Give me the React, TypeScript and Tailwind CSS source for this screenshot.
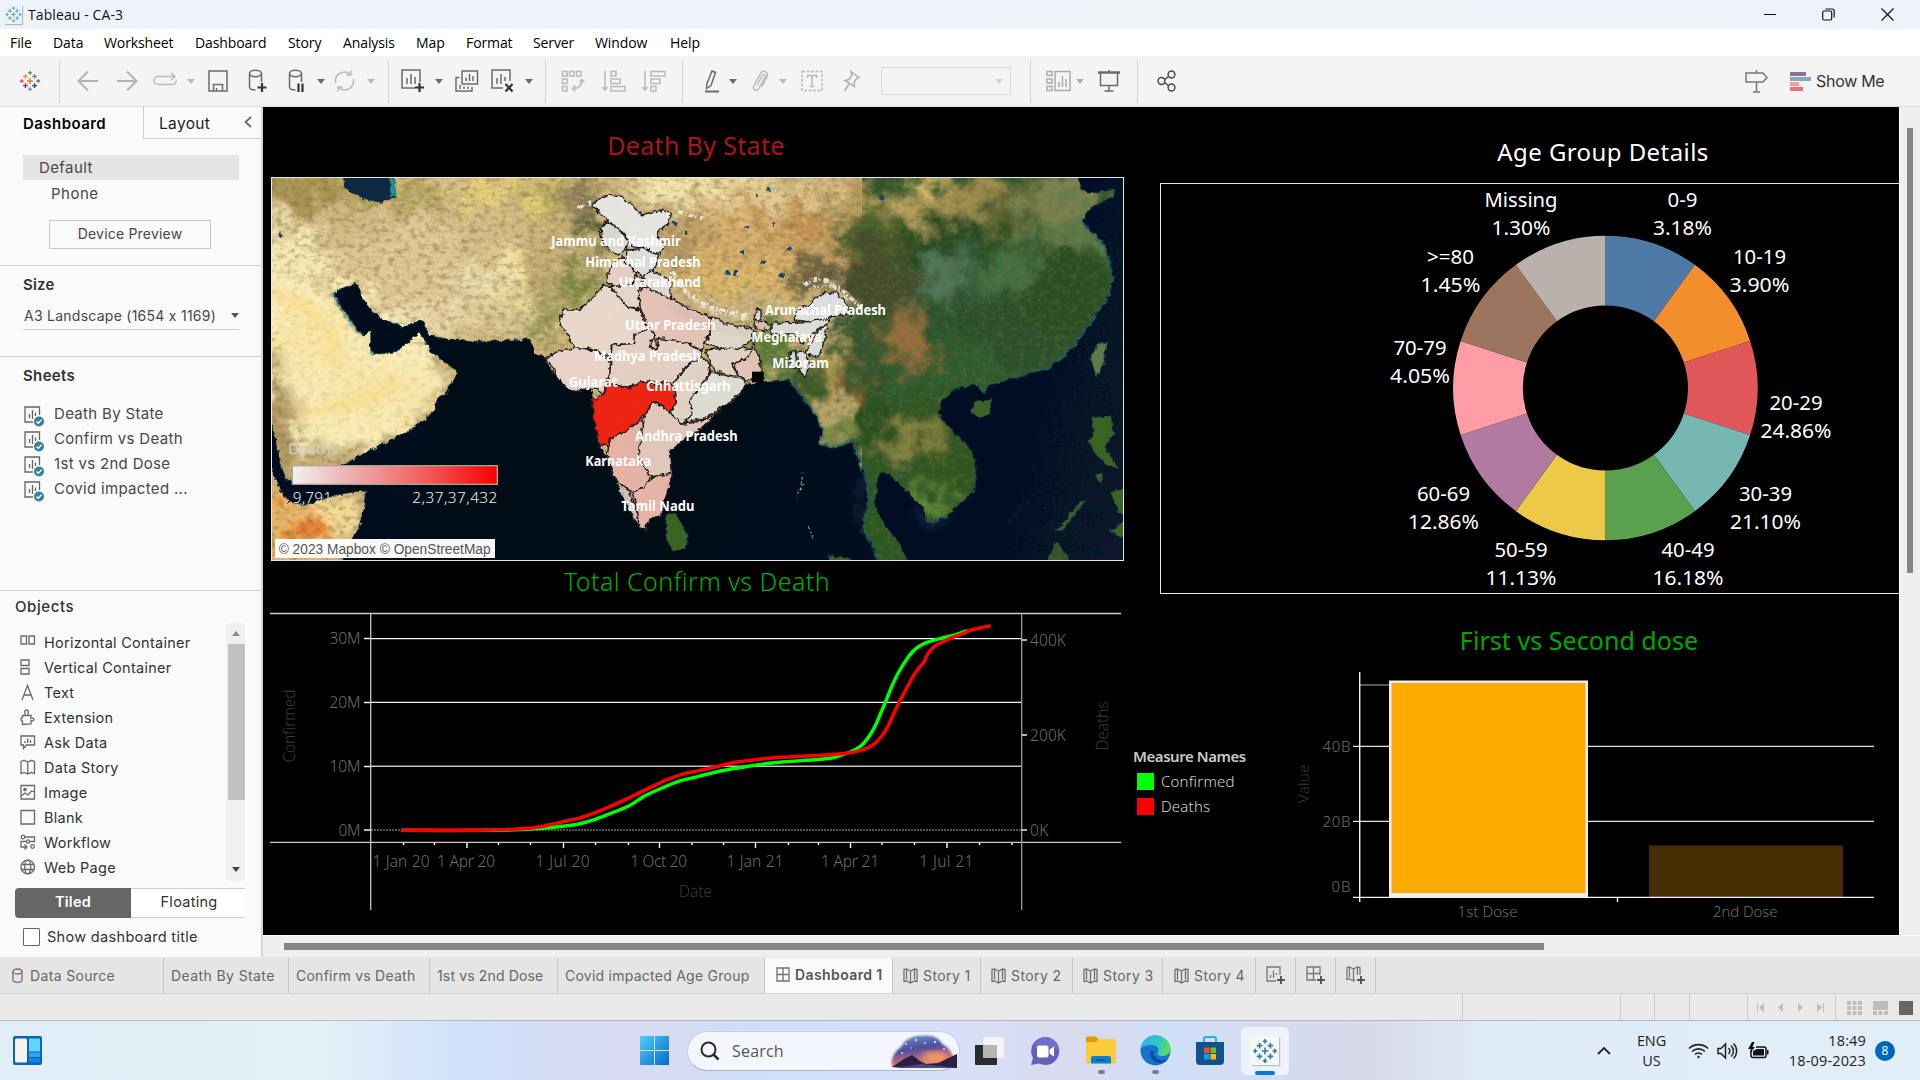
import React from "react";

type P = { children?: React.ReactNode; className?: string };

/* ---------- shared pieces ---------- */

const Caret = ({ className = "" }: P) => (
  <svg className={`shrink-0 ${className}`} width="8" height="5" viewBox="0 0 8 5">
    <path d="M0 0h8L4 5z" fill="currentColor" />
  </svg>
);

const Sep = ({ className = "" }: P) => <div className={`h-[43px] w-px shrink-0 bg-[#d2d2d2] ${className}`} />;

const Ic = ({ w = 24, h = 22, className = "", children }: P & { w?: number; h?: number }) => (
  <svg
    className={`shrink-0 ${className}`}
    width={w}
    height={h}
    viewBox={`0 0 ${w} ${h}`}
    fill="none"
    stroke="currentColor"
    strokeWidth="1.5"
  >
    {children}
  </svg>
);

const plusMarks: [number, number, number, string][] = [
  [12, 12, 3.2, "#e8762c"],
  [7, 7, 2.6, "#eb912c"],
  [17, 7, 2.6, "#5b879b"],
  [7, 17, 2.6, "#c72035"],
  [17, 17, 2.6, "#1f457e"],
  [12, 3, 2, "#59879b"],
  [12, 21, 2, "#7199a6"],
  [3, 12, 2, "#c8586d"],
  [21, 12, 2, "#5c6692"],
];

const TableauMark = ({ size, mono, className = "" }: P & { size: number; mono?: string }) => (
  <svg className={`shrink-0 ${className}`} width={size} height={size} viewBox="0 0 24 24">
    {plusMarks.map(([x, y, r, c], i) => (
      <path key={i} d={`M${x - r} ${y}h${2 * r}M${x} ${y - r}v${2 * r}`} stroke={mono ?? c} strokeWidth="1.5" />
    ))}
  </svg>
);

/* ---------- title, menu, toolbar ---------- */

const TitleBar = () => (
  <div className="flex h-[29px] items-center bg-[linear-gradient(90deg,#eef3fb_0%,#eef3fb_50%,#edf3f6_60%,#eef3f8_75%,#eef2fb_100%)] pl-1">
    <div className="flex h-[19px] w-[18px] items-center justify-center bg-[#eef1f2] shadow-[1px_1px_1px_#b5bcc0]">
      <TableauMark size={17} mono="#5aa0c4" />
    </div>
    <span className="ml-[6px] font-['Open_Sans'] text-[14px] tracking-[0.1px] text-[#111]">Tableau - CA-3</span>
    <div className="ml-auto flex items-center text-[#111]">
      <svg width="13" height="13" viewBox="0 0 13 13" stroke="currentColor">
        <path d="M0 6.500h12" />
      </svg>
      <svg className="ml-[45px]" width="13" height="13" viewBox="0 0 13 13" fill="none" stroke="currentColor" strokeWidth="1.200">
        <rect x="0.700" y="3" width="9" height="9" rx="1.500" />
        <path d="M3.500 1h6.500a2.200 2.200 0 0 1 2.200 2.200v6.300" />
      </svg>
      <svg className="ml-[46px] mr-[26px]" width="13" height="13" viewBox="0 0 13 13" stroke="currentColor" strokeWidth="1.200">
        <path d="M0.500 0.500l12 12M12.500 0.500l-12 12" />
      </svg>
    </div>
  </div>
);

const menu = [
  ["File", "w-[43px]"],
  ["Data", "w-[51px]"],
  ["Worksheet", "w-[91px]"],
  ["Dashboard", "w-[93px]"],
  ["Story", "w-[55px]"],
  ["Analysis", "w-[73px]"],
  ["Map", "w-[50px]"],
  ["Format", "w-[67px]"],
  ["Server", "w-[62px]"],
  ["Window", "w-[75px]"],
  ["Help", "w-[50px]"],
];

const MenuBar = () => (
  <div className="flex h-[27px] items-center bg-white pl-[10px] font-['Open_Sans'] text-[14px] tracking-[-0.1px] text-black">
    {menu.map(([t, w]) => (
      <span key={t} className={w}>
        {t}
      </span>
    ))}
  </div>
);

const Toolbar = () => (
  <div className="flex h-[51px] items-center border-b border-[#dcdcdc] bg-[#f4f4f4] text-[#6b6b6b]">
    <TableauMark size={22} className="ml-[19px]" />
    <Sep className="ml-[18px]" />
    <Ic w={21} className="ml-[17px] text-[#b4b4b4]">
      <path d="M21 11H1.500M11 1.500L1.500 11l9.500 9.500" strokeWidth="2" />
    </Ic>
    <Ic w={21} className="ml-[19px] text-[#b4b4b4]">
      <path d="M0 11h19.500M10 1.500l9.500 9.500-9.500 9.500" strokeWidth="2" />
    </Ic>
    <Ic w={25} className="ml-[15px] text-[#b9b9b9]">
      <path d="M21 6.500H5a3.800 3.800 0 0 0 0 8h14.500a3.800 3.800 0 0 0 3.500-5M18 3l4 3.500-4 3.500" />
    </Ic>
    <Caret className="ml-[9px] text-[#b9b9b9]" />
    <Ic w={20} className="ml-[13px]">
      <path d="M1 1h18v20H1zM5.500 21v-6.500h9V21M8.500 18v3" />
    </Ic>
    <Ic w={20} h={24} className="ml-5">
      <ellipse cx="7.500" cy="4.500" rx="6" ry="3.200" />
      <path d="M1.500 4.500V18c0 1.800 2.500 3 6 3M13.500 4.500V13" />
      <path d="M14 14v9M9.500 18.500h9" stroke="#333" strokeWidth="2.200" />
    </Ic>
    <Ic w={20} h={24} className="ml-5">
      <ellipse cx="7.500" cy="4.500" rx="6" ry="3.200" />
      <path d="M1.500 4.500V18c0 1.800 2.500 3 6 3M13.500 4.500V13" />
      <path d="M10.500 14.500v8.500M14.500 14.500v8.500" stroke="#333" strokeWidth="2.200" />
    </Ic>
    <Caret className="ml-[9px]" />
    <Ic w={21} className="ml-[9px] text-[#b9b9b9]">
      <path d="M1.800 13A8.800 8.800 0 0 1 16 4.200M19.200 9A8.800 8.800 0 0 1 5 17.800M16.800 0.500v4.500h-4.500M4.200 21.500V17h4.500" />
    </Ic>
    <Caret className="ml-3 text-[#b9b9b9]" />
    <Sep className="ml-[13px]" />
    <Ic h={24} className="ml-3">
      <path d="M14 19H1V1h18v12M6 15V9M10 15V5M14 15V8" />
      <path d="M18.500 14v9M14 18.500h9" stroke="#333" strokeWidth="2.200" />
    </Ic>
    <Caret className="ml-[10px]" />
    <Ic className="ml-3">
      <path d="M7 1h15.500v13H7zM11 11V7.500M14.500 11V4M18 11V6M4.500 7.500H1V21h16v-4M5 19v-4M9 19v-2.500M13 19v-2.500" />
    </Ic>
    <Ic h={24} className="ml-3">
      <path d="M12 19H1V1h18v11M6 15V9M10 15V5M14 12V8" />
      <path d="M14.500 15l7 7.500M21.500 15l-7 7.500" stroke="#333" strokeWidth="2.200" />
    </Ic>
    <Caret className="ml-[10px]" />
    <Sep className="ml-[12px]" />
    <Ic className="ml-[15px] text-[#b9b9b9]">
      <path d="M1.500 1.500h4.500v4.500H1.500zM8.500 1.500H13v4.500H8.500zM15.500 1.500H20v4.500h-4.500zM1.500 9H6v4.500H1.500zM1.500 16.500H6V21H1.500z" />
      <path d="M21 10c0 5-3 8.500-9 8.500M18.500 12.500L21 9.500l2.500 3M14.500 15.500l-3 3 3 3" />
    </Ic>
    <Ic className="ml-[17px] text-[#b9b9b9]">
      <path d="M3 1v19M0.500 17L3 20l2.500-3M9 1.500h5v4.500H9zM9 9h9v4.500H9zM9 16.500h14V21H9z" />
    </Ic>
    <Ic className="ml-4 text-[#b9b9b9]">
      <path d="M3 1v19M0.500 17L3 20l2.500-3M9 1.500h14v4.500H9zM9 9h9v4.500H9zM9 16.500h5V21H9z" />
    </Ic>
    <Sep className="ml-4" />
    <Ic w={18} h={24} className="ml-5">
      <path d="M9 2l3.500 1.500-4.500 13-4.500 3 .5-5z" />
      <path d="M2 22.500h14" strokeWidth="2" />
    </Ic>
    <Caret className="ml-[8px]" />
    <Ic w={18} className="ml-[14px] text-[#b9b9b9]">
      <path d="M6 15.500l5-9.500c1.500-2.500 4-1 3 1L8 18.500c-2 3.500-7 1-5-3L9.500 3.500C11.500-.5 18 1.500 16 6.500l-5 10" />
    </Ic>
    <Caret className="ml-[10px] text-[#b9b9b9]" />
    <Ic w={22} className="ml-[14px] text-[#b9b9b9]">
      <path d="M1 1.500h20v19H1z" strokeDasharray="3 1.500" />
      <path d="M6.500 8V5.500h9V8M11 5.500v11M8.500 16.500h5" />
    </Ic>
    <Ic w={19} className="ml-[19px] text-[#b0b0b0]">
      <path d="M9 1.500l8 6-2.500 1-2.500 4 .5 4L3 10.500l4-1L10 5zM7 14l-4.500 7" />
    </Ic>
    <div className="ml-5 flex h-7 w-[130px] shrink-0 items-center justify-end border border-[#dadada] pr-[7px] text-[#cfcfcf]">
      <Caret />
    </div>
    <Sep className="ml-[19px]" />
    <Ic w={25} className="ml-[15px] text-[#ababab]">
      <path d="M1 1.500h5v4H1zM1 9h5v4H1zM1 16.500h5v4H1zM9 1.500h15v19H9zM13 17v-5M16.500 17V6M20 17V9" />
    </Ic>
    <Caret className="ml-[5px] text-[#ababab]" />
    <Ic w={22} className="ml-[14px]">
      <path d="M0 2.500h22" strokeWidth="2.500" />
      <path d="M2.500 3v12.500h17V3M11 0v2M11 15.500v5M6.500 21h9" />
    </Ic>
    <Sep className="ml-[17px]" />
    <Ic w={20} className="ml-[19px] text-[#4a4a4a]">
      <circle cx="4.500" cy="11" r="3.400" />
      <circle cx="14.500" cy="4.500" r="3.400" />
      <circle cx="14.500" cy="17.500" r="3.400" />
      <path d="M7.500 9.500l4-3M7.500 12.500l4 3" />
    </Ic>
    <Ic w={24} h={24} className="ml-auto text-[#777]">
      <path d="M1 4h17l4 4.500-4 4.500H1zM11.500 1v3M11.500 13v10M8 23h7" />
    </Ic>
    <svg className="ml-[21px] shrink-0" width="21" height="19" viewBox="0 0 21 19">
      <rect width="16" height="4" fill="#8a719b" />
      <rect y="5" width="21" height="4" fill="#7fa6cf" />
      <rect y="10" width="9" height="4" fill="#f7a380" />
      <rect y="15" width="13" height="4" fill="#f26d78" />
    </svg>
    <span className="ml-[5px] mr-[35px] w-[69px] whitespace-nowrap font-['Inter'] text-[16px] tracking-[-0.3px] text-[#333]">Show Me</span>
  </div>
);

/* ---------- side panel ---------- */

const SheetIcon = () => (
  <svg width="21" height="21" viewBox="0 0 21 21" fill="none" stroke="#666" strokeWidth="1.300">
    <path d="M9 16H1V1h14.500v8M5.500 12V8M8.500 13V4M11.500 10V6.500" />
    <circle cx="15" cy="15.500" r="5" fill="#3a7ea1" stroke="none" />
    <path d="M12.500 15.500l1.800 1.800 3.200-3.600" stroke="#fff" />
  </svg>
);

const objects: [string, React.ReactNode][] = [
  ["Horizontal Container", <path key="p" d="M1 2h5.500v8H1zM9 2h5.500v8H9z" />],
  ["Vertical Container", <path key="p" d="M1 1h8v5.500H1zM1 9.500h8V15H1z" />],
  ["Text", <path key="p" d="M2 16L7.500 1.500 13 16M4 11h7" />],
  ["Extension", <path key="p" d="M2.500 15.500V12c-2 .5-2-4 0-3.500V6.500h3.200C4 3 4.500 1 6.500 1s2.500 2 .8 5.500H11v3c4-1.500 4 3.500 0 2v3.500z" />],
  ["Ask Data", <path key="p" d="M1 2h13.500v9H6.500L3.500 14.500V11H1zM5 9V7M7.700 9V4.500M10.500 9V6" />],
  ["Data Story", <path key="p" d="M1 2.500l3-1.200 3.700 1.700 3.800-1.700 3 1.200v12l-3-1-3.800 1.500L4 13.500l-3 1zM7.700 3v12" />],
  [
    "Image",
    <g key="p">
      <path d="M1 1.500h13.500V15H1zM1 12l4-3 3 2 3.500-4 3 1" />
      <circle cx="5" cy="5.500" r="1.200" fill="#666" />
    </g>,
  ],
  ["Blank", <path key="p" d="M1 1.500h13.500V15H1z" />],
  [
    "Workflow",
    <g key="p">
      <circle cx="3" cy="3" r="1.800" />
      <circle cx="12.500" cy="12.500" r="1.800" />
      <circle cx="8" cy="7.500" r="1.600" />
      <path d="M5 3h9.500v4.500H10M6.500 7.500H1V13h5.500M4.500 10.500L7 13l-2.500 2.500" />
    </g>,
  ],
  [
    "Web Page",
    <g key="p">
      <circle cx="7.700" cy="8" r="6.800" />
      <ellipse cx="7.700" cy="8" rx="3" ry="6.800" />
      <path d="M1.500 5.500h12.500M1.500 10.500h12.500" />
    </g>,
  ],
];

const Sidebar = () => (
  <div className="flex w-[263px] shrink-0 flex-col border-r-2 border-[#d4d4d4] bg-[#fafafa] font-['Inter'] text-[15px] text-[#484848]">
    <div className="flex h-8">
      <div className="flex w-[143px] items-center pl-[23px] pt-[2px] font-semibold tracking-[0.45px] text-black">Dashboard</div>
      <div className="flex flex-1 items-center border-b border-l border-[#cfcfcf] pl-[15px] text-[#222]">
        <span className="pt-[2px] text-[15.500px] tracking-[0.35px]">Layout</span>
        <svg className="mb-[2px] ml-auto mr-[9px]" width="8" height="12" viewBox="0 0 8 12" fill="none" stroke="#666" strokeWidth="1.700">
          <path d="M7 1L1.500 6 7 11" />
        </svg>
      </div>
    </div>
    <div className="ml-[23px] mt-4 flex h-[25px] w-[216px] items-center bg-[#e5e5e5] pl-4 pt-[2px]">
      <span className="tracking-[0.4px]">Default</span>
    </div>
    <div className="flex h-[25px] items-center pl-[51px] pt-[3px] tracking-[0.5px]">Phone</div>
    <div className="ml-[49px] mt-[15px] flex h-[29px] w-[162px] items-center justify-center border border-[#c9c9c9] pb-[2px] text-[14px] tracking-[0.2px]">
      Device Preview
    </div>
    <div className="mt-4 h-[91px] border-t border-[#cfcfcf] pl-[23px] pt-[8px]">
      <div className="font-semibold leading-[22px] tracking-[0.2px] text-[#333]">Size</div>
      <div className="mt-[10px] flex h-[24px] w-[216px] items-center justify-between border-b border-[#c9c9c9] pb-1 pl-[1px] text-[14px]">
        <span className="whitespace-nowrap tracking-[0.26px]">A3 Landscape (1654 x 1169)</span>
        <Caret className="text-[#555]" />
      </div>
    </div>
    <div className="h-[234px] border-t border-[#cfcfcf] pl-[23px] pt-[8px]">
      <div className="font-semibold leading-[22px] tracking-[0.35px] text-[#333]">Sheets</div>
      <div className="mt-[15px]">
        {["Death By State", "Confirm vs Death", "1st vs 2nd Dose", "Covid impacted ..."].map((s) => (
          <div key={s} className="flex h-[25px] items-center pl-[1px]">
            <span className="pt-[3px]">
              <SheetIcon />
            </span>
            <span className="ml-[9px] tracking-[0.32px]">{s}</span>
          </div>
        ))}
      </div>
    </div>
    <div className="flex flex-1 flex-col border-t border-[#cfcfcf] pl-[15px] text-[14.500px] tracking-[0.27px] text-[#333]">
      <div className="pt-[5px] text-[15px] font-medium leading-[22px] tracking-[0.6px]">Objects</div>
      <div className="mt-[5px] flex h-[258px] w-[230px]">
        <div className="flex-1 overflow-hidden pt-[7px]">
          {objects.map(([t, g]) => (
            <div key={t} className="flex h-[25px] items-center pl-[5px]">
              <svg width="16" height="17" viewBox="0 0 16 17" fill="none" stroke="#6a6a6a" strokeWidth="1.300">
                {g}
              </svg>
              <span className="ml-2 whitespace-nowrap">{t}</span>
            </div>
          ))}
        </div>
        <div className="flex w-[19px] flex-col items-center bg-[#f0f0f0]">
          <Caret className="my-2 rotate-180 text-[#8c8c8c]" />
          <div className="h-[156px] w-[17px] self-end bg-[#c1c1c1]" />
          <Caret className="mb-[9px] mt-auto text-[#444]" />
        </div>
      </div>
      <div className="mt-[7px] flex h-[30px] w-[230px]">
        <div className="flex w-[116px] items-center justify-center rounded-l-sm bg-[#666] pb-[2px] font-semibold text-white">Tiled</div>
        <div className="flex flex-1 items-center justify-center border-y border-[#cfcfcf] bg-white pb-[2px] pl-[2px]">Floating</div>
      </div>
      <div className="mt-[8px] flex items-center pl-2">
        <div className="h-[18px] w-[17px] rounded-[1px] border border-[#666] bg-white" />
        <span className="ml-[7px] tracking-[0.32px]">Show dashboard title</span>
      </div>
    </div>
  </div>
);

/* ---------- map ---------- */

const states: [string, string][] = [
  ["#e8e8e6", "990,300 1010,282 1045,272 1080,275 1110,300 1140,330 1170,322 1200,315 1225,325 1220,355 1190,375 1185,395 1210,420 1195,445 1170,440 1150,430 1110,425 1100,405 1080,380 1050,355 1035,345 1015,325"],
  ["#dddbd6", "1015,375 1030,350 1050,355 1080,385 1100,410 1095,435 1070,450 1045,440 1020,410"],
  ["#dcdfdf", "1095,435 1150,430 1190,450 1180,490 1145,515 1120,500 1090,470"],
  ["#e6d0c6", "1050,480 1080,455 1095,475 1120,505 1110,540 1060,545 1030,530"],
  ["#dedcd9", "1145,515 1170,495 1230,530 1225,580 1170,560 1150,545"],
  ["#e8d6cb", "1045,545 1110,540 1125,515 1145,520 1130,560 1135,610 1100,610 1075,580"],
  ["#ebd9ce", "1025,540 1045,545 1075,580 1100,610 1135,615 1150,655 1165,670 1115,690 1120,715 1055,720 1050,760 1030,750 1000,735 940,728 910,680 890,650 905,615 950,615 990,580"],
  ["#e9d3cc", "848,760 880,742 940,728 1000,735 1040,765 1045,800 1030,840 1025,870 1000,850 985,850 925,860 880,810 875,790"],
  ["#e6c3b9", "1150,545 1225,580 1284,612 1344,635 1345,680 1325,715 1320,735 1280,715 1200,705 1180,700 1185,735 1165,725 1175,690 1150,655 1135,610 1130,560"],
  ["#e5d2c6", "1050,720 1120,715 1115,690 1165,670 1175,690 1165,725 1185,735 1190,700 1280,715 1320,740 1320,755 1280,780 1250,810 1235,835 1135,830 1100,850 1040,835 1045,790"],
  ["#e3d3c8", "1235,835 1280,780 1320,755 1345,780 1330,830 1300,870 1285,885 1290,930 1260,958 1225,925 1240,900"],
  ["#dfded6", "1330,825 1345,800 1400,815 1450,825 1440,860 1390,900 1330,940 1270,955 1290,930 1285,885"],
  ["#e1c8bd", "1150,930 1170,890 1200,900 1225,925 1260,958 1330,945 1370,920 1320,970 1260,1010 1222,1040 1228,1105 1175,1115 1130,1080 1130,1020 1140,970"],
  ["#e6b3a8", "1045,1000 1110,965 1140,940 1140,1000 1125,1050 1150,1090 1170,1115 1150,1145 1110,1160 1070,1135 1055,1110 1035,1050"],
  ["#cfc3ba", "1060,1125 1100,1160 1115,1195 1130,1230 1132,1268 1110,1235 1085,1180"],
  ["#e7b4aa", "1110,1160 1150,1145 1175,1115 1228,1105 1222,1145 1205,1190 1200,1230 1165,1245 1145,1272 1130,1268 1128,1225"],
  ["#e3d8cd", "1344,635 1390,655 1475,670 1470,705 1440,730 1380,730 1325,715 1345,690"],
  ["#e3d5c8", "1330,735 1380,730 1440,730 1480,735 1450,765 1410,775 1425,815 1360,800 1345,775"],
  ["#e6c3b9", "1475,705 1480,735 1495,760 1500,815 1455,830 1430,810 1410,775 1450,765 1470,735"],
  ["#dcdcda", "1475,640 1485,612 1497,615 1497,643"],
  ["#e3b9ae", "1475,645 1525,655 1520,680 1480,668"],
  ["#dfded9", "1530,655 1640,650 1690,625 1740,610 1700,650 1660,680 1620,720 1600,690 1530,690"],
  ["#dfe1e1", "1600,620 1640,600 1670,570 1720,560 1750,590 1770,630 1730,630 1700,640 1640,650 1600,645"],
  ["#dcdfdf", "1660,690 1695,655 1690,700 1670,755 1630,745"],
  ["#dcdfdd", "1605,740 1635,745 1640,790 1628,815 1615,800"],
  ["#d8dbd7", "1580,750 1600,735 1605,790 1590,785"],
  ["#f01a0e", "1036,832 1100,850 1135,830 1175,840 1235,835 1240,900 1220,925 1200,900 1170,890 1150,930 1110,965 1080,985 1045,1000 1040,1025 1014,1020 1000,975 988,888 1025,870"],
];

const mapLabels: [string, number, number, number][] = [
  ["Jammu and Kashmir", 868, 1256, 408],
  ["Himachal Pradesh", 970, 1316, 471],
  ["Uttarakhand", 1070, 1316, 531],
  ["Uttar Pradesh", 1089, 1361, 661],
  ["Madhya Pradesh", 996, 1317, 754],
  ["Gujarat", 920, 1067, 831],
  ["Chhattisgarh", 1153, 1406, 844],
  ["Andhra Pradesh", 1119, 1427, 993],
  ["Karnataka", 970, 1168, 1069],
  ["Tamil Nadu", 1078, 1297, 1203],
  ["Arunachal Pradesh", 1509, 1872, 615],
  ["Meghalaya", 1468, 1680, 697],
  ["Mizoram", 1531, 1701, 774],
];

/* cx, cy, rx, ry, colour */
const terrain: [number, number, number, number, string][] = [
  [600, 420, 700, 330, "#d3b982"],
  [120, 260, 180, 60, "#a8944f"],
  [420, 270, 160, 40, "#b0a156"],
  [860, 270, 260, 50, "#bfae5b"],
  [700, 260, 120, 50, "#e6cf76"],
  [200, 760, 330, 290, "#fbedb8"],
  [60, 470, 130, 120, "#f5e8b2"],
  [130, 700, 120, 90, "#fbe08a"],
  [330, 860, 180, 80, "#f8df8d"],
  [60, 960, 60, 180, "#b49a60"],
  [230, 1050, 150, 30, "#c9b077"],
  [130, 1280, 130, 110, "#f2b65e"],
  [120, 1290, 60, 45, "#e8782e"],
  [230, 1230, 80, 50, "#f6dc98"],
  [420, 480, 220, 130, "#dfc592"],
  [740, 520, 120, 80, "#f2df98"],
  [660, 520, 60, 50, "#eee0b4"],
  [560, 640, 130, 50, "#e8d5a4"],
  [760, 630, 120, 50, "#d7c691"],
  [860, 470, 60, 140, "#c5ac6f"],
  [950, 540, 60, 80, "#7f883f"],
  [860, 650, 45, 80, "#98964f"],
  [950, 640, 50, 50, "#d9c77e"],
  [1000, 370, 60, 60, "#4c5a2c"],
  [970, 290, 90, 50, "#8f7f55"],
  [1330, 245, 240, 50, "#f6e6ac"],
  [1500, 420, 330, 130, "#d3a966"],
  [1480, 520, 220, 60, "#d9b366"],
  [1520, 290, 200, 50, "#e0c084"],
  [1600, 360, 120, 50, "#c08e50"],
  [1250, 400, 80, 90, "#b5955f"],
  [1680, 500, 110, 50, "#6d5f3d"],
  [1790, 290, 90, 40, "#b59a5a"],
  [1840, 400, 130, 80, "#48602a"],
  [1850, 520, 130, 110, "#454c2c"],
  [1990, 235, 80, 30, "#ecca78"],
  [2000, 300, 110, 50, "#b39c5c"],
  [2130, 270, 100, 60, "#a18e4e"],
  [2250, 300, 60, 70, "#5f6630"],
  [2400, 290, 140, 90, "#7d8250"],
  [2420, 390, 130, 90, "#5f7c49"],
  [2100, 410, 190, 50, "#26481c"],
  [2160, 560, 220, 150, "#2f5936"],
  [2040, 520, 90, 50, "#52775a"],
  [2400, 560, 170, 150, "#2a4d24"],
  [2250, 500, 90, 50, "#466f42"],
  [2180, 720, 220, 110, "#2b502a"],
  [2050, 800, 200, 100, "#2f5b2e"],
  [1930, 680, 50, 70, "#98703c"],
  [1960, 750, 40, 30, "#9e6f3a"],
  [1790, 720, 80, 120, "#34552f"],
  [1700, 820, 34, 100, "#b8a556"],
  [1760, 850, 26, 50, "#86602f"],
  [1630, 860, 60, 100, "#3b5a2b"],
  [1530, 740, 80, 80, "#587a35"],
  [1720, 990, 60, 40, "#75863f"],
  [1820, 950, 60, 120, "#28501f"],
  [1960, 1010, 90, 55, "#85843f"],
  [2020, 920, 120, 50, "#2d5722"],
  [2060, 1080, 80, 90, "#2f541d"],
  [2010, 1200, 60, 50, "#5d8a30"],
  [1840, 1240, 70, 160, "#2b581e"],
];

const Map = () => (
  <svg width="853" height="384" viewBox="30 219 2553 1146" preserveAspectRatio="none" className="block border border-[#e6e6e6] font-['Noto_Sans']">
    <defs>
      <filter id="soft" x="-50%" y="-50%" width="200%" height="200%">
        <feGaussianBlur stdDeviation="22" />
      </filter>
      <filter id="glow" x="-20%" y="-20%" width="140%" height="140%">
        <feGaussianBlur stdDeviation="12" />
      </filter>
      <filter id="shore" x="-5%" y="-5%" width="110%" height="110%">
        <feGaussianBlur stdDeviation="4" />
      </filter>
      <filter id="warp" x="0" y="0" width="100%" height="100%">
        <feTurbulence type="fractalNoise" baseFrequency="0.014" numOctaves="6" seed="4" result="n" />
        <feDisplacementMap in="SourceGraphic" in2="n" scale="190" xChannelSelector="R" yChannelSelector="G" />
      </filter>
      <filter id="coast" x="-5%" y="-5%" width="110%" height="110%">
        <feTurbulence type="fractalNoise" baseFrequency="0.060" numOctaves="3" seed="9" result="n" />
        <feDisplacementMap in="SourceGraphic" in2="n" scale="17" xChannelSelector="R" yChannelSelector="G" />
      </filter>
      <filter id="relief" x="0" y="0" width="100%" height="100%">
        <feTurbulence type="fractalNoise" baseFrequency="0.045 0.065" numOctaves="5" seed="12" result="n" />
        <feColorMatrix in="n" type="matrix" values="0 0 0 0 0.14  0 0 0 0 0.13  0 0 0 0 0.05  3 0 0 0 -1.4" />
      </filter>
      <filter id="veins" x="0" y="0" width="100%" height="100%">
        <feTurbulence type="turbulence" baseFrequency="0.010 0.022" numOctaves="4" seed="7" result="n" />
        <feColorMatrix in="n" type="matrix" values="0 0 0 0 0.42  0 0 0 0 0.30  0 0 0 0 0.12  -9 0 0 0 1.3" />
      </filter>
      <filter id="ridges" x="0" y="0" width="100%" height="100%">
        <feTurbulence type="turbulence" baseFrequency="0.018" numOctaves="4" seed="21" result="n" />
        <feColorMatrix in="n" type="matrix" values="0 0 0 0 0.45  0 0 0 0 0.55  0 0 0 0 0.32  -9 0 0 0 1.2" />
      </filter>
      <filter id="light" x="0" y="0" width="100%" height="100%">
        <feTurbulence type="fractalNoise" baseFrequency="0.050 0.080" numOctaves="5" seed="31" result="n" />
        <feColorMatrix in="n" type="matrix" values="0 0 0 0 1  0 0 0 0 0.94  0 0 0 0 0.72  0 3 0 0 -1.5" />
      </filter>
      <linearGradient id="deaths">
        <stop offset="0" stopColor="#f2f0f0" />
        <stop offset="0.250" stopColor="#ecb6b8" />
        <stop offset="0.600" stopColor="#f06a6a" />
        <stop offset="1" stopColor="#f70000" />
      </linearGradient>
      <linearGradient id="sea" gradientUnits="userSpaceOnUse" x1="200" y1="600" x2="2580" y2="1200">
        <stop offset="0" stopColor="#051020" />
        <stop offset="0.350" stopColor="#020812" />
        <stop offset="0.600" stopColor="#040d1c" />
        <stop offset="1" stopColor="#071329" />
      </linearGradient>
    </defs>
    <rect x="0" y="200" width="2620" height="1190" fill="#cbb07a" />
    <rect x="1800" y="200" width="820" height="1190" fill="#2f5429" />
    <g filter="url(#warp)">
      <g filter="url(#soft)">
        {terrain.map(([cx, cy, rx, ry, f], i) => (
          <ellipse key={i} cx={cx} cy={cy} rx={rx} ry={ry} fill={f} />
        ))}
      </g>
    </g>
    <rect x="0" y="200" width="1760" height="560" filter="url(#veins)" opacity="0.450" />
    <rect x="1760" y="330" width="860" height="1060" filter="url(#ridges)" opacity="0.180" />
    <rect x="0" y="200" width="2620" height="1190" filter="url(#relief)" opacity="0.400" />
    <rect x="350" y="200" width="1400" height="500" filter="url(#light)" opacity="0.250" />
    <path
      d="M10 480L120 530 210 590 300 700 330 760 470 720 500 780 560 810 520 880 490 920 340 1000 200 1040 110 960 70 860 50 700 10 640Z"
      fill="#fbecb6"
      opacity="0.660"
      filter="url(#glow)"
    />
    <path d="M20 560C150 590 240 690 220 790M110 930C240 900 330 890 420 820" fill="none" stroke="#f8cf68" strokeWidth="22" opacity="0.500" filter="url(#glow)" />
    <g filter="url(#coast)" fill="none">
      <path d="M1225 590L1284 640 1360 665 1480 690" stroke="#263c1b" strokeWidth="30" />
      <path
        d="M1230 500L1270 560 1350 610 1470 635M1625 540L1650 525 1690 525 1760 570 1800 610M1250 320L1330 345M950 310L990 290"
        stroke="#f3f1ea"
        strokeWidth="12"
        strokeDasharray="14 5 4 9"
        opacity="0.850"
      />
      <path d="M1240 515L1280 575 1350 622 1460 645M1640 550L1700 540 1770 590" stroke="#efece2" strokeWidth="7" strokeDasharray="5 8 9 4" opacity="0.700" />
      <path
        d="M1230 350l12 6M1270 380l10 4M1450 365l6 3M1500 470l12 6M1425 495l-8 14M1550 515l18-6M1390 502l14 4M1850 275l16 6M50 385l12 12M1480 272l8 0M1515 252l10 0M1440 440l6 0M1530 360l6 0M1580 430l6 3"
        stroke="#14476b"
        strokeWidth="11"
      />
    </g>
    <g filter="url(#coast)">
      <g stroke="#1f5a5d" strokeWidth="11" fill="none" strokeLinejoin="round" filter="url(#shore)">
        <path d="M1590 840L1624 885 1660 930 1680 980 1668 1020 1720 1030 1770 1012 1784 1060 1805 1110 1818 1180 1798 1280 1830 1320 1858 1400M340 748L325 735 325 690 290 680 270 650 240 610 215 560M2244 825L2364 790 2434 730 2484 660 2544 570 2554 510 2534 430 2494 380 2459 350" />
      </g>
      <g fill="url(#sea)" stroke="#123338" strokeWidth="2.500">
        <path d="M500 690L540 700 640 712 800 702 820 745 850 760 865 790 880 810 925 860 960 855 985 850 995 880 1000 960 1012 1020 1030 1050 1055 1110 1090 1180 1130 1265 1150 1272 1165 1240 1200 1230 1212 1150 1228 1110 1220 1040 1260 1010 1320 970 1344 940 1394 900 1434 870 1444 840 1500 830 1580 825 1590 840 1624 885 1660 930 1680 980 1668 1020 1720 1030 1770 1012 1784 1060 1805 1110 1818 1180 1798 1280 1830 1320 1858 1400 230 1400 250 1340 290 1270 310 1200 313 1155 250 1165 190 1180 130 1200 80 1190 60 1165 10 1050 10 930 30 960 50 1050 70 1125 100 1130 150 1110 240 1080 340 1030 430 985 480 950 520 915 522 885 550 870 585 800 545 770 510 740 480 690 472 680 440 710 400 740 340 748 325 735 325 690 290 680 270 650 240 610 215 560 280 535 300 580 330 620 370 645 420 665 480 645Z" />
        <path d="M240 190H397L400 275 360 292 300 280 250 250Z" fill="#0d2a42" />
        <path d="M1949 1400L1904 1300 1864 1250 1839 1200 1849 1105 1879 1105 1924 1150 1984 1210 1999 1260 2054 1235 2134 1160 2144 1090 2124 1030 2074 980 2029 925 2039 885 2084 850 2144 840 2169 870 2184 840 2244 825 2364 790 2434 730 2484 660 2544 570 2554 510 2534 430 2494 380 2459 350 2484 310 2554 275 2559 250 2484 265 2454 250 2449 180H2640V1400H2454L2384 1310 2334 1400Z" />
      </g>
      <path d="M385 215L397 215 402 275 385 270Z" fill="#1c8f92" />
      <path d="M1960 1210l40 50 55-22M1800 1120l-8 60M1790 1200l0 50" stroke="#16406b" strokeWidth="16" opacity="0.500" fill="none" filter="url(#glow)" />
      <g fill="#3a6423" stroke="#1d4a48" strokeWidth="3">
        <path d="M1212 1230L1240 1225 1275 1290 1270 1330 1235 1342 1215 1310Z" />
        <path d="M2124 920L2144 890 2189 885 2184 920 2154 943Z" />
        <path d="M2484 760L2509 715 2536 712 2524 780 2504 815Z" fill="#5d7a48" />
        <path d="M2494 940L2545 932 2555 985 2528 1025 2548 1060 2570 1090 2540 1080 2505 1050 2480 1010 2495 990Z" />
        <path d="M2500 1105L2515 1105 2525 1135 2512 1130ZM2545 1160L2590 1150 2590 1230 2570 1220ZM2384 1280L2460 1185 2468 1190 2400 1275ZM2545 1280L2590 1250 2590 1300ZM1700 1350L1780 1368H1700Z" />
      </g>
      <path d="M300 690L325 680 325 745 305 735Z" fill="#efe2b2" />
      <g fill="none" stroke="#23507a" strokeWidth="10" opacity="0.350" strokeDasharray="4 22" filter="url(#shore)">
        <path d="M990 1160l5 60 10 100 0 40M1020 1180v20M2240 1250l60-60 20-30M2530 850l10 60 20 60M2470 1250l60-50M2430 1330l100 20" />
      </g>
      <path d="M1622 1100l-6 50-8 30M1640 1265l14 36" stroke="#9a9a88" strokeWidth="4" strokeDasharray="8 8" fill="none" />
      <g stroke="#1b1b1b" strokeWidth="4" strokeLinejoin="round">
        {states.map(([f, p], i) => (
          <polygon key={i} points={p} fill={f} fillOpacity="0.950" />
        ))}
      </g>
    </g>
    <rect x="1470" y="800" width="35" height="32" fill="#000" />
    <g fill="#fff" fontSize="40" fontWeight="700">
      {mapLabels.map(([t, a, b, y]) => (
        <text key={t} x={a} y={y + 14} textLength={b - a} lengthAdjust="spacingAndGlyphs">
          {t}
        </text>
      ))}
    </g>
    <text x="78" y="1047" fontSize="45" fill="#cfd0c8" textLength="149" lengthAdjust="spacingAndGlyphs">
      Deaths
    </text>
    <rect x="91" y="1082" width="615" height="56" fill="url(#deaths)" stroke="#a8a590" strokeWidth="4" />
    <g fontSize="46" fill="#f2f2f2" fontWeight="300">
      <text x="92" y="1194" textLength="118">9,791</text>
      <text x="451" y="1194" textLength="255">2,37,37,432</text>
    </g>
    <rect x="39" y="1302" width="660" height="57" fill="#fff" fillOpacity="0.970" />
    <text x="50" y="1348" fontSize="42" fill="#555" fontFamily="Liberation Sans, sans-serif" textLength="636" lengthAdjust="spacingAndGlyphs">
      © 2023 Mapbox © OpenStreetMap
    </text>
  </svg>
);

/* ---------- line chart ---------- */

const red =
  "418,811 650,811 720,809 780,806 830,801 860,795 900,786 950,775 1000,758 1050,737 1105,712 1160,685 1210,661 1260,643 1310,632 1360,621 1420,607 1480,599 1560,592 1634,588 1700,584 1754,580 1794,572 1824,560 1844,545 1864,522 1880,495 1910,430 1934,385 1954,348 1974,320 1986,306 1994,288 2006,270 2024,255 2054,240 2084,228 2110,218 2124,211 2154,204 2186,197";
const green =
  "418,811 700,811 790,808 850,804 900,799 950,792 1000,778 1050,759 1100,738 1150,707 1200,684 1250,664 1310,649 1380,632 1450,620 1520,610 1560,606 1634,601 1704,595 1754,580 1784,566 1804,551 1824,525 1841,495 1855,462 1871,425 1889,380 1912,333 1939,291 1964,264 1999,246 2034,236 2084,223 2117,212";

/* Catmull-Rom spline through the sampled points */
const smooth = (s: string) => {
  const p = s.split(" ").map((q) => q.split(",").map(Number));
  let d = `M${p[0][0]} ${p[0][1]}`;
  for (let i = 0; i < p.length - 1; i++) {
    const a = p[Math.max(i - 1, 0)];
    const b = p[i];
    const c = p[i + 1];
    const e = p[Math.min(i + 2, p.length - 1)];
    d += `C${b[0] + (c[0] - a[0]) / 8} ${b[1] + (c[1] - a[1]) / 8} ${c[0] - (e[0] - b[0]) / 8} ${c[1] - (e[1] - b[1]) / 8} ${c[0]} ${c[1]}`;
  }
  return d;
};

const minor = [403.5, 434.5, 498.5, 530.5, 595.5, 628.5, 692, 723.5, 788.5, 818.5, 882, 914.5, 979.5, 1012];
const major = [467, 563.5, 659.5, 755.5, 850.5, 947];
const dates: [string, number, number][] = [
  ["1 Jan 20", 401, 57],
  ["1 Apr 20", 466, 58],
  ["1 Jul 20", 562.5, 54],
  ["1 Oct 20", 658.7, 57],
  ["1 Jan 21", 755, 57],
  ["1 Apr 21", 850, 58],
  ["1 Jul 21", 946.3, 54],
];

const LineChart = () => (
  <svg width="852" height="300" viewBox="270 612 852 300" className="block font-['Noto_Sans']" fontSize="15.500" fontWeight="300">
    <g stroke="#c9c9c9" strokeWidth="1.300">
      <path d="M270 613.500H1121M270 842.300H1121" />
      <path d="M370.700 613.500V910" />
      <path d="M1021.700 613.500V910" stroke="#9a9a9a" />
    </g>
    <path d="M371 638.700H1021M371 702.300H1021" stroke="#f4f4f4" strokeWidth="1.300" />
    <path d="M371 766.300H1021" stroke="#c4c4c4" strokeWidth="1.500" />
    <path d="M371 830H1021" stroke="#aaa" strokeDasharray="2 1" />
    <path d="M364 638.500h7M364 702.500h7M364 766.500h7M364 830h7M1022 640h5M1022 735h5M1022 830h5" stroke="#eee" strokeWidth="1.500" />
    <path d={minor.map((x) => `M${x} 843v2`).join("") + major.map((x) => `M${x} 843v5`).join("")} stroke="#fff" strokeWidth="1.400" />
    <g transform="translate(262 560) scale(0.33333)" fill="none" strokeWidth="10.500" strokeLinejoin="round">
      <path d={smooth(green)} stroke="#0f0" />
      <path d={smooth(red)} stroke="#f00" />
    </g>
    <g fill="#6e6e6e">
      {(
        [
          ["30M", 638.7, 31],
          ["20M", 702.5, 31],
          ["10M", 766.5, 31],
          ["0M", 830.5, 22],
        ] as [string, number, number][]
      ).map(([t, y, w]) => (
        <text key={t} x={360.500 - w} y={y + 5.500} textLength={w}>
          {t}
        </text>
      ))}
      <text x="1030" y="646" textLength="36">400K</text>
      <text x="1030" y="741" textLength="36">200K</text>
      <text x="1030" y="836" textLength="18.500">0K</text>
      {dates.map(([t, x, w]) => (
        <text key={t} x={x - w / 2} y="867" textLength={w}>
          {t}
        </text>
      ))}
    </g>
    <g fill="#3a3a3a">
      <text x="679" y="897" textLength="33">Date</text>
      <text transform="translate(295 762.500) rotate(-90)" textLength="73">Confirmed</text>
      <text transform="translate(1108 750.500) rotate(-90)" textLength="49">Deaths</text>
    </g>
  </svg>
);

/* ---------- donut ---------- */

const slices: [string, string, string, number, number, number][] = [
  ["0-9", "3.18%", "#4e79a7", 1683, 200, 59],
  ["10-19", "3.90%", "#f28e2b", 1760, 257, 60],
  ["20-29", "24.86%", "#e15759", 1796.5, 403, 71],
  ["30-39", "21.10%", "#76b7b2", 1766, 494, 71],
  ["40-49", "16.18%", "#59a14f", 1688.5, 550, 71],
  ["50-59", "11.13%", "#edc948", 1521.5, 550, 71],
  ["60-69", "12.86%", "#b07aa1", 1444, 494, 71],
  ["70-79", "4.05%", "#ff9da7", 1420.5, 348, 60],
  [">=80", "1.45%", "#9c755f", 1451, 257, 60],
  ["Missing", "1.30%", "#bab0ac", 1521.5, 200, 59],
];
const nameWidth: Record<string, number> = { "0-9": 30, ">=80": 47, Missing: 73 };

const arc = (i: number) => {
  const p = (r: number, k: number) => {
    const a = (k * Math.PI) / 5;
    return `${(1605.4 + r * Math.sin(a)).toFixed(2)} ${(388 - r * Math.cos(a)).toFixed(2)}`;
  };
  return `M${p(152.2, i)}A152.2 152.2 0 0 1 ${p(152.2, i + 1)}L${p(82.5, i + 1)}A82.5 82.5 0 0 0 ${p(82.5, i)}Z`;
};

const Donut = () => (
  <svg width="738" height="409" viewBox="1161 184 738 409" className="block font-['Noto_Sans']" fontSize="20" fill="#fff">
    {slices.map(([n, v, c, x, y, w], i) => {
      const nw = nameWidth[n] ?? 53;
      return (
        <g key={n}>
          <path d={arc(i)} fill={c} />
          <text x={x - nw / 2 - 0.5} y={y + 7} textLength={nw} lengthAdjust="spacingAndGlyphs">
            {n}
          </text>
          <text x={x - w / 2 - 0.5} y={y + 34.500} textLength={w} lengthAdjust="spacingAndGlyphs">
            {v}
          </text>
        </g>
      );
    })}
  </svg>
);

/* ---------- bars ---------- */

const Bars = () => (
  <svg width="609" height="265" viewBox="1290 670 609 265" className="block font-['Noto_Sans']" fontSize="15" fontWeight="300">
    <path d="M1353 746.300H1874M1353 821.300H1874" stroke="#e2e2e2" strokeWidth="1.300" />
    <path d="M1360 685H1392" stroke="#777" strokeWidth="1.500" />
    <rect x="1389" y="680.500" width="199" height="217" fill="#eeeef2" />
    <rect x="1391.500" y="683" width="194" height="210" fill="#fa0" />
    <rect x="1649" y="845.500" width="194" height="52" fill="#442d00" />
    <path d="M1359.700 672V902M1353 897.400H1874M1617.500 897v5" stroke="#f2f2f2" strokeWidth="1.400" fill="none" />
    <g fill="#6e6e6e">
      <text x="1322.500" y="752" textLength="28">40B</text>
      <text x="1322.500" y="827" textLength="28">20B</text>
      <text x="1331.500" y="892" textLength="19">0B</text>
      <text x="1457.500" y="917" textLength="60">1st Dose</text>
      <text x="1713" y="917" textLength="64.500">2nd Dose</text>
    </g>
    <text transform="translate(1308.500 803) rotate(-90)" textLength="38.500" fill="#3a3a3a">
      Value
    </text>
  </svg>
);

const Dashboard = () => (
  <div className="flex h-[828px] w-[1636px] shrink-0 overflow-hidden bg-black font-['Noto_Sans']">
    <div className="flex w-[868px] shrink-0 flex-col pl-2">
      <div className="flex h-[70px] items-center justify-center pr-[10px] pt-[7px] text-[25px] text-[#ad121c]">
        <span className="tracking-[0.35px]">Death By State</span>
      </div>
      <Map />
      <div className="-ml-px flex h-[51px] items-center justify-center pb-[10px] pr-[7px] text-[25px] font-light text-[#00b000]">
        <span className="tracking-[0.45px]">Total Confirm vs Death</span>
      </div>
      <div className="-ml-px">
        <LineChart />
      </div>
    </div>
    <div className="flex flex-1 flex-col">
      <div className="ml-[29px] flex h-[76px] items-center justify-center pl-[147px] pt-[14px] text-[24px] text-white">
        <span className="tracking-[0.42px]">Age Group Details</span>
      </div>
      <div className="ml-[29px] border-y border-l border-[#e4e4e4]">
        <Donut />
      </div>
      <div className="flex">
        <div className="w-[159px] pl-[2px] pt-[151px] text-[15px] text-[#d4d4d4]">
          <div className="whitespace-nowrap font-semibold leading-[22px] tracking-[-0.45px] text-[#c8c8c8]">Measure Names</div>
          <div className="mt-[2px] flex h-[25px] items-center pl-1">
            <div className="h-[17px] w-[17px] bg-[#00ff00]" />
            <span className="ml-[7px] font-light tracking-[0.2px]">Confirmed</span>
          </div>
          <div className="flex h-[25px] items-center pl-1">
            <div className="h-[17px] w-[17px] bg-[#ff0000]" />
            <span className="ml-[7px] font-light tracking-[0.2px]">Deaths</span>
          </div>
        </div>
        <div>
          <div className="flex h-[76px] items-center justify-center pr-[31px] pt-[18px] text-[25px] text-[#00a800]">
            <span className="tracking-[0.05px]">First vs Second dose</span>
          </div>
          <Bars />
        </div>
      </div>
    </div>
  </div>
);

/* ---------- sheet tabs, status, taskbar ---------- */

const BookIcon = () => (
  <svg width="15" height="16" viewBox="0 0 15 16" fill="none" stroke="#707070" strokeWidth="1.300">
    <path d="M1 1.500l2.500-.5L7.500 3l4-2 2.500.5v12l-2.500-.5-4 2-4-2-2.500.5zM3.500 1v10.500M11.500 1v10.500M7.500 3v12" />
  </svg>
);

const GridIcon = () => (
  <svg width="14" height="15" viewBox="0 0 14 15" fill="none" stroke="#707070" strokeWidth="1.300">
    <path d="M1 1h12v13H1zM7 1v13M1 7.500h12" />
  </svg>
);

const Tab = ({ className = "", children }: P) => (
  <div className={`flex shrink-0 items-center whitespace-nowrap border-r border-[#c8c8c8] ${className}`}>{children}</div>
);

const Tabs = () => (
  <div className="flex h-[37px] border-b border-[#d0d0d0] bg-[#e5e5e5] pt-px font-['Inter'] text-[14px] tracking-[0.25px] text-[#666]">
    <Tab className="w-[164px] pl-3">
      <svg width="11" height="15" viewBox="0 0 11 15" fill="none" stroke="#707070" strokeWidth="1.300">
        <ellipse cx="5.500" cy="3.500" rx="4.500" ry="2.500" />
        <path d="M1 3.500V12c0 1.500 2 2.300 4.500 2.300S10 13.500 10 12V3.500" />
      </svg>
      <span className="ml-[7px] tracking-[0.35px]">Data Source</span>
    </Tab>
    <Tab className="w-[125px] pl-[7px] tracking-[0.4px]">Death By State</Tab>
    <Tab className="w-[141px] pl-[7px]">Confirm vs Death</Tab>
    <Tab className="w-[128px] pl-[7px] tracking-[0.15px]">1st vs 2nd Dose</Tab>
    <Tab className="w-[207px] pl-[7px]">Covid impacted Age Group</Tab>
    <Tab className="w-[128px] bg-[#fafafa] pb-[2px] pl-[11px] font-semibold text-[#555]">
      <GridIcon />
      <span className="ml-[5px] tracking-[0.4px]">Dashboard 1</span>
    </Tab>
    <Tab className="w-[88px] pl-[10px]">
      <BookIcon />
      <span className="ml-[5px] tracking-[0.4px]">Story 1</span>
    </Tab>
    <Tab className="w-[92px] pl-[10px]">
      <BookIcon />
      <span className="ml-[5px] tracking-[0.4px]">Story 2</span>
    </Tab>
    <Tab className="w-[90px] pl-[10px]">
      <BookIcon />
      <span className="ml-[5px] tracking-[0.4px]">Story 3</span>
    </Tab>
    <Tab className="w-[93px] pl-[11px]">
      <BookIcon />
      <span className="ml-[5px] tracking-[0.4px]">Story 4</span>
    </Tab>
    {["M10 15H1V1h13v8M4.500 12V9M7.500 12V4.500M10.500 9V7", "M10 14H1V1h13v8M7.500 1v13M1 7.500h13", "M9 13.500L7.500 15l-4-2-2.500.5v-12l2.500-.5 4 2 4-2 2.500.5V9M3.500 1v10.500M11.500 1v8M7.500 3v12"].map((d) => (
      <Tab key={d} className="w-10 justify-center">
        <svg width="20" height="19" viewBox="0 0 20 19" fill="none" stroke="#777" strokeWidth="1.300">
          <path d={d} />
          <path d="M15 10v8M11 14h8" stroke="#555" strokeWidth="2" />
        </svg>
      </Tab>
    ))}
  </div>
);

const StatusBar = () => (
  <div className="flex h-[27px] justify-end border-b border-[#b4b9c4] bg-[#eaeaea]">
    <div className="w-[158px] border-l border-[#cacaca]" />
    <div className="w-[34px] border-l border-[#cacaca]" />
    <div className="w-[35px] border-l border-[#cacaca]" />
    <div className="w-[58px] border-l border-[#cacaca]" />
    <div className="flex w-[88px] items-center justify-between border-l border-[#cacaca] pl-[9px] pr-[11px]">
      <svg width="7" height="9" viewBox="0 0 7 9" fill="#bdbdbd">
        <path d="M0 0h1v9H0zM7 0v9L2 4.500z" />
      </svg>
      <svg width="7" height="9" viewBox="0 0 7 9" fill="#bdbdbd">
        <path d="M6 0v9L1 4.500z" />
      </svg>
      <svg width="7" height="9" viewBox="0 0 7 9" fill="#bdbdbd">
        <path d="M1 0v9l5-4.500z" />
      </svg>
      <svg width="7" height="9" viewBox="0 0 7 9" fill="#bdbdbd">
        <path d="M6 0h1v9H6zM0 0v9l5-4.500z" />
      </svg>
    </div>
    <div className="flex w-[85px] items-center border-l border-[#cacaca] pl-[11px] pt-px">
      <svg width="15" height="14" viewBox="0 0 15 14" fill="#bdbdbd">
        <path d="M0 0h4v4H0zM5.500 0h4v4h-4zM11 0h4v4h-4zM0 5h4v4H0zM5.500 5h4v4h-4zM11 5h4v4h-4zM0 10h4v4H0zM5.500 10h4v4h-4zM11 10h4v4h-4z" />
      </svg>
      <svg className="ml-[11px]" width="15" height="14" viewBox="0 0 15 14" fill="#bdbdbd">
        <path d="M0 0h15v9H0zM0 10h4v4H0zM5.500 10h4v4h-4zM11 10h4v4h-4z" />
      </svg>
      <div className="ml-[11px] h-[14px] w-[14px] bg-[#666]" />
    </div>
  </div>
);

const SearchArt = () => (
  <svg width="70" height="37" viewBox="0 -2 70 37">
    <defs>
      <linearGradient id="sky" x1="0.300" y1="0" x2="0.600" y2="1">
        <stop offset="0" stopColor="#6f8cc4" />
        <stop offset="0.400" stopColor="#4a4e99" />
        <stop offset="0.650" stopColor="#a0648a" />
        <stop offset="1" stopColor="#f6955a" />
      </linearGradient>
      <filter id="haze">
        <feGaussianBlur stdDeviation="1.200" />
      </filter>
      <filter id="bloom" x="-20%" y="-20%" width="140%" height="140%">
        <feGaussianBlur stdDeviation="3.500" />
      </filter>
    </defs>
    <path d="M3 33C1 22 7 17 12 13 17 4 26 1 34 2c9-2 17 3 19 8 8 3 13 13 13 23z" fill="url(#sky)" filter="url(#haze)" />
    <ellipse cx="46" cy="23" rx="12" ry="5" fill="#ff9f5c" filter="url(#bloom)" />
    <g fill="#b9dcff">
      <circle cx="17" cy="10" r="1" />
      <circle cx="27" cy="6" r="1.200" />
      <circle cx="36" cy="9" r="0.900" />
      <circle cx="46" cy="8" r="1.200" />
      <circle cx="55" cy="15" r="1" />
      <circle cx="13" cy="19" r="1" />
      <circle cx="22" cy="14" r="0.800" />
    </g>
    <path d="M3 33l12-8 8-4 8 6 6 3 12-1 19-9v14z" fill="#2a1f42" />
    <path d="M5 34l28-4 35 4z" fill="#4a4a84" />
  </svg>
);

const Taskbar = () => (
  <div className="flex h-[59px] items-center bg-[linear-gradient(90deg,#e0eef7_0%,#e4f0f8_17%,#d0e1fa_24%,#d8daf2_33%,#cfe0fa_40%,#d7e0f8_50%,#d9daee_56%,#cfdff8_61%,#d8d9ea_71%,#dfecf8_78%,#e2eef8_100%)] font-['Open_Sans'] text-[#222]">
    <svg className="ml-[13px]" width="29" height="29" viewBox="0 0 29 29">
      <rect width="29" height="29" rx="2" fill="#0f63b5" />
      <rect x="2" y="2.500" width="12" height="24" rx="1.500" fill="#f4f4f4" />
      <rect x="16" y="2.500" width="11" height="13" fill="#63d3fb" />
      <rect x="16" y="16.500" width="11" height="4.500" fill="#2aa9f3" />
      <rect x="16" y="22" width="11" height="4.500" fill="#0d84e6" />
    </svg>
    <svg className="ml-[598px]" width="29" height="29" viewBox="0 0 29 29">
      <defs>
        <linearGradient id="win" x2="1" y2="1">
          <stop offset="0" stopColor="#4fd0fb" />
          <stop offset="1" stopColor="#0469cc" />
        </linearGradient>
      </defs>
      <path d="M0 0h14v14H0zM15 0h14v14H15zM0 15h14v14H0zM15 15h14v14H15z" fill="url(#win)" />
    </svg>
    <div className="ml-[18px] flex h-[40px] w-[273px] shrink-0 items-center rounded-full border border-b-[#a9b2cc] border-[#c3cfea] bg-[#f3f6fd] pl-3">
      <svg width="20" height="20" viewBox="0 0 20 20" fill="none" stroke="#2b2b2b" strokeWidth="2">
        <circle cx="8.500" cy="8.500" r="7" />
        <path d="M13.500 13.500l5 5" strokeWidth="2.500" />
      </svg>
      <span className="ml-[12px] text-[16px] tracking-[0.2px] text-[#555]">Search</span>
      <span className="ml-auto mr-0">
        <SearchArt />
      </span>
    </div>
    <svg className="ml-[14px] shrink-0" width="31" height="30" viewBox="0 0 31 30">
      <rect x="9" y="1" width="21" height="21" rx="1.500" fill="#f4f4f6" />
      <path d="M1 9h22v19a1 1 0 0 1-1 1H2a1 1 0 0 1-1-1z" fill="#2b2b2b" />
      <path d="M9 9h14v13H9z" fill="#b4b4b6" />
    </svg>
    <svg className="ml-[25px] shrink-0" width="30" height="30" viewBox="0 0 30 30">
      <path d="M15 1a14 14 0 1 1-6 26.500L1 29l2-7A14 14 0 0 1 15 1z" fill="#6460c0" />
      <path d="M15 1a14 14 0 0 1 14 14l-6-4L4 12A14 14 0 0 1 15 1z" fill="#7c74cf" opacity="0.700" />
      <rect x="7" y="9.500" width="11.500" height="12" rx="2" fill="#fff" />
      <path d="M19.500 13.500l4.500-3v10l-4.500-3z" fill="#fff" />
    </svg>
    <div className="relative ml-[26px] shrink-0">
      <svg width="30" height="29" viewBox="0 0 30 29">
        <path d="M0 2a1.500 1.500 0 0 1 1.500-1.500H10L13 4h0v4H0z" fill="#e09a06" />
        <path d="M0 6h10l3-3h15.500A1.500 1.500 0 0 1 30 4.500V26a1.500 1.500 0 0 1-1.500 1.500h-27A1.500 1.500 0 0 1 0 26z" fill="#fccb3c" />
        <path d="M5 27.500V22a2 2 0 0 1 2-2h16a2 2 0 0 1 2 2v5.500z" fill="#0f7fd4" />
        <path d="M10 24h10" stroke="#0a4f92" strokeWidth="1.500" />
      </svg>
      <div className="absolute -bottom-[9px] left-[12px] h-1 w-[7px] rounded-full bg-[#7a8090]" />
    </div>
    <div className="relative ml-[24px] shrink-0">
      <svg width="31" height="31" viewBox="0 0 31 31">
        <defs>
          <linearGradient id="eg" x1="0" y1="0.300" x2="1" y2="0.500">
            <stop offset="0" stopColor="#2fb4ee" />
            <stop offset="0.600" stopColor="#30c8c0" />
            <stop offset="1" stopColor="#63dd50" />
          </linearGradient>
        </defs>
        <circle cx="15.500" cy="15.500" r="15" fill="#1673cf" />
        <path d="M.6 14C2 5 8 .5 15.500.5 24 .5 30.500 7 30.500 13.500c0 5-4 7.500-8 7.500-4.500 0-6-1.500-4.500-3.500 2-3-1-7.500-6-7.500S2 11 .6 14z" fill="url(#eg)" />
        <path d="M11 16c-2 6 2 12 9 12 4 0 7-2 8-4-5 3-12 1-14-4-1-2 .5-4 .5-4z" fill="#0c4a9a" />
      </svg>
      <div className="absolute -bottom-[8px] left-[12px] h-1 w-[7px] rounded-full bg-[#7a8090]" />
    </div>
    <svg className="ml-[24px] shrink-0" width="30" height="30" viewBox="0 0 30 30">
      <path d="M9 6V3a2 2 0 0 1 2-2h8a2 2 0 0 1 2 2v3" fill="none" stroke="#22b1ee" strokeWidth="2" />
      <path d="M1 6h28v19a4 4 0 0 1-4 4H5a4 4 0 0 1-4-4z" fill="#12528f" />
      <path d="M9 11.500h5.500V17H9z" fill="#f25022" />
      <path d="M15.500 11.500H21V17h-5.500z" fill="#7fba00" />
      <path d="M9 18h5.500v5.500H9z" fill="#00a4ef" />
      <path d="M15.500 18H21v5.500h-5.500z" fill="#ffb900" />
    </svg>
    <div className="relative ml-[16px] flex h-12 w-12 shrink-0 items-center justify-center rounded-[5px] bg-[#edf2fb]">
      <div className="flex h-[28px] w-[28px] items-center justify-center bg-[#f7f7f5] shadow-[1px_1px_1px_#b9bfc7]">
        <TableauMark size={26} mono="#2f7fa8" />
      </div>
      <div className="absolute bottom-0 left-[14px] h-[4px] w-5 rounded-full bg-[#0a78d4]" />
    </div>
    <div className="ml-auto flex shrink-0 items-center">
      <svg width="14" height="9" viewBox="0 0 14 9" fill="none" stroke="#222" strokeWidth="1.800">
        <path d="M1 8l6-6 6 6" />
      </svg>
      <div className="ml-[24px] w-[33px] text-center text-[14.500px] leading-[20px] tracking-[-0.1px]">
        ENG
        <br />
        US
      </div>
      <svg className="ml-[20px]" width="21" height="17" viewBox="0 0 21 17" fill="none" stroke="#222" strokeWidth="1.600">
        <path d="M1 6.500a13.500 13.500 0 0 1 19 0M4 9.500a9.300 9.300 0 0 1 13 0M7 12.500a5 5 0 0 1 7 0" />
        <circle cx="10.500" cy="15" r="1.200" fill="#222" stroke="none" />
      </svg>
      <svg className="ml-[8px]" width="21" height="18" viewBox="0 0 21 18" fill="none" stroke="#222" strokeWidth="1.500">
        <path d="M1 6.500h3l4.500-4.500v14L4 11.500H1zM11.500 6a4 4 0 0 1 0 6M14 3.500a7.500 7.500 0 0 1 0 11M16.500 1.500a10.500 10.500 0 0 1 0 15" />
      </svg>
      <svg className="ml-[10px]" width="21" height="17" viewBox="0 0 21 17">
        <path d="M3 8v5.500A2 2 0 0 0 5 15.500h11a2 2 0 0 0 2-2V7a2 2 0 0 0-2-2H8" fill="none" stroke="#111" strokeWidth="1.500" />
        <path d="M5 9l4-2h7v6.500H5zM19 8h1.500v4.500H19zM4 0L0 7h3l-1 4 5-6H4.500L6.500 0z" fill="#111" />
      </svg>
      <div className="ml-[17px] w-[80px] whitespace-nowrap text-right text-[14.500px] leading-[20px] tracking-[0.15px]">
        18:49
        <br />
        18-09-2023
      </div>
      <div className="ml-[9px] mr-[25px] flex h-5 w-5 items-center justify-center rounded-full bg-[#0067c0] text-[12px] text-white">8</div>
    </div>
  </div>
);

export default function App() {
  return (
    <div className="flex h-[1080px] w-[1920px] flex-col overflow-hidden bg-white">
      <TitleBar />
      <MenuBar />
      <Toolbar />
      <div className="flex h-[850px]">
        <Sidebar />
        <div className="flex flex-1 flex-col bg-[#efefef]">
          <div className="flex">
            <Dashboard />
            <div className="w-[21px] border-l border-white pl-[7px] pt-[21px]">
              <div className="h-[445px] w-[6px] bg-[#858585]" />
            </div>
          </div>
          <div className="flex-1 border-t border-white pl-[21px] pt-[7px]">
            <div className="h-[7px] w-[1260px] bg-[#858585]" />
          </div>
        </div>
      </div>
      <Tabs />
      <StatusBar />
      <Taskbar />
    </div>
  );
}
